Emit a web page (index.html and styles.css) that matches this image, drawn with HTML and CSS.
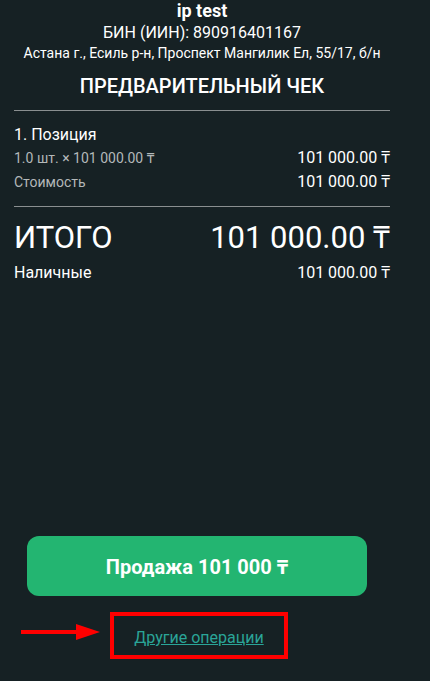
FILE: index.html
```html
<!DOCTYPE html>
<html lang="ru">
<head>
    <meta charset="UTF-8">
    <meta name="viewport" content="width=device-width, initial-scale=1.0">
    <title>Предварительный чек</title>
    <link rel="stylesheet" href="styles.css">
</head>
<body>
    <div class="receipt">
        <div class="shop-name">ip test</div>
        <div class="shop-bin">БИН (ИИН): 890916401167</div>
        <div class="shop-address">Астана г., Есиль р-н, Проспект Мангилик Ел, 55/17, б/н</div>
        <div class="receipt-title">ПРЕДВАРИТЕЛЬНЫЙ ЧЕК</div>

        <hr class="divider">

        <div class="position">
            <div class="position-name">1. Позиция</div>
            <div class="row">
                <span class="muted">1.0 шт. × 101 000.00 ₸</span>
                <span class="value">101 000.00 ₸</span>
            </div>
            <div class="row">
                <span class="muted">Стоимость</span>
                <span class="value">101 000.00 ₸</span>
            </div>
        </div>

        <hr class="divider">

        <div class="row total">
            <span>ИТОГО</span>
            <span>101 000.00 ₸</span>
        </div>
        <div class="row payment">
            <span>Наличные</span>
            <span class="value">101 000.00 ₸</span>
        </div>
    </div>

    <div class="footer">
        <button class="sale-btn">Продажа 101 000 ₸</button>
        <div class="other-row">
            <svg class="arrow" width="79" height="16" viewBox="0 0 79 16">
                <rect x="0" y="6" width="56" height="4" fill="#ff0000"/>
                <polygon points="55,0 79,8 55,16" fill="#ff0000"/>
            </svg>
            <div class="highlight">
                <a href="#" class="other-link">Другие операции</a>
            </div>
        </div>
    </div>
</body>
</html>
```

FILE: styles.css
```css
body {
    font-family: Roboto, "Noto Sans", sans-serif;
    margin: 0;
    padding: 0;
    background-color: #162124;
    color: #ffffff;
    min-height: 100vh;
    display: flex;
    flex-direction: column;
}
.receipt {
    width: 376px;
    margin-left: 14px;
}
.shop-name {
    text-align: center;
    font-size: 18px;
    font-weight: bold;
    line-height: 22px;
}
.shop-bin {
    text-align: center;
    font-size: 16px;
    line-height: 22px;
}
.shop-address {
    text-align: center;
    font-size: 14px;
    line-height: 18px;
}
.receipt-title {
    text-align: center;
    font-size: 20px;
    font-weight: 500;
    line-height: 24px;
    margin-top: 12px;
}
.divider {
    border: none;
    height: 1px;
    background-color: #8a8f90;
    margin: 12px 0 0 0;
}
.position {
    margin-top: 12px;
}
.position-name {
    font-size: 16px;
    line-height: 23px;
}
.row {
    display: flex;
    justify-content: space-between;
    align-items: baseline;
    line-height: 23px;
}
.muted {
    font-size: 14px;
    color: #b3b8b9;
}
.value {
    font-size: 16px;
}
.position + .divider {
    margin-top: 12px;
}
.total {
    font-size: 31px;
    line-height: 36px;
    margin-top: 13px;
}
.payment {
    font-size: 16px;
    line-height: 22px;
    margin-top: 6px;
}
.footer {
    margin-top: auto;
    padding: 0 0 22px 0;
}
.sale-btn {
    display: block;
    width: 340px;
    height: 60px;
    margin-left: 27px;
    background-color: #23b571;
    color: #ffffff;
    border: none;
    border-radius: 12px;
    font-family: Roboto, "Noto Sans", sans-serif;
    font-size: 20px;
    font-weight: bold;
    cursor: pointer;
}
.other-row {
    display: flex;
    align-items: center;
    margin-top: 16px;
    padding-left: 21px;
    gap: 10px;
}
.arrow {
    display: block;
    margin-bottom: 8px;
}
.highlight {
    box-sizing: border-box;
    width: 178px;
    height: 47px;
    border: 4px solid #ff0000;
    display: flex;
    align-items: center;
    justify-content: center;
}
.other-link {
    color: #2aa598;
    font-size: 16px;
    margin-top: 4px;
}
```
